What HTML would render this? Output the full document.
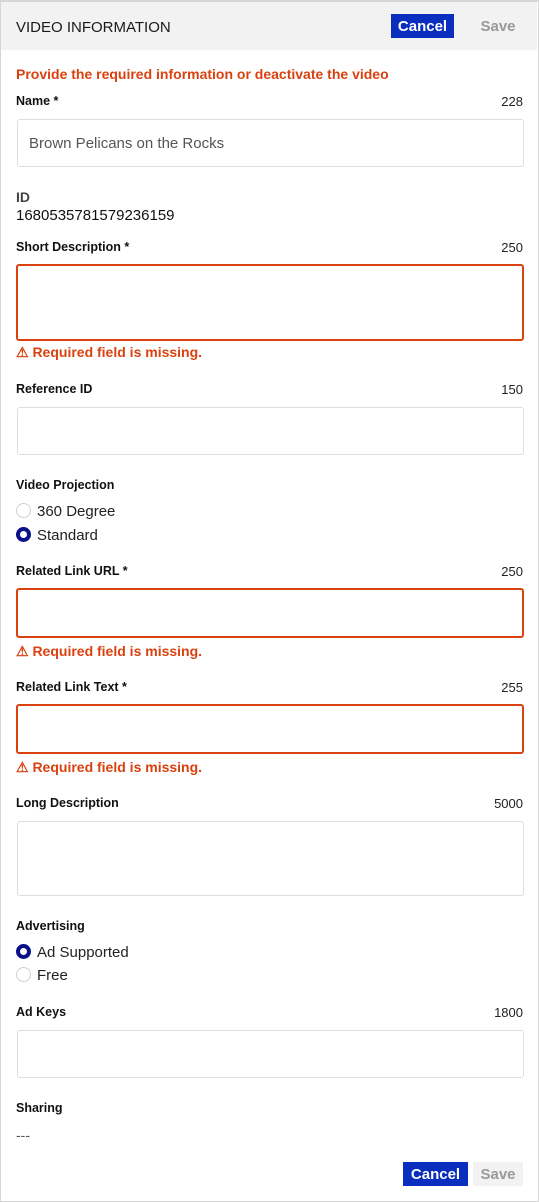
<!DOCTYPE html>
<html><head><meta charset="utf-8"><style>
*{box-sizing:border-box;margin:0;padding:0}
body{width:539px;height:1202px;background:#fff;font-family:"Liberation Sans",sans-serif;color:#1a1a1a;position:relative;overflow:hidden}
.frame{position:absolute;left:0;top:0;width:539px;height:1202px;border:1px solid #d6d6d6;border-top-width:2px}
.hdr{position:absolute;left:1px;top:2px;width:536px;height:48px;background:#f2f2f2}
.a{position:absolute;white-space:nowrap}
.lbl{font-size:12.5px;font-weight:bold;color:#111}
.cnt{font-size:13px;right:16px;color:#222}
.in{position:absolute;left:17px;width:507px;border:1px solid #dedede;border-radius:3px}
.err{border:2px solid #d9410f;left:16px;width:508px}
.req{font-size:14px;font-weight:bold;color:#d9410f;left:16px}
.txt{font-size:15px;color:#222}
.r{position:absolute;left:16px;width:15px;height:15px;border-radius:50%;border:1px solid #cfcfcf;background:#fff}
.r.on{border:4px solid #0a0f8a;background:#fff}
.btn{position:absolute;background:#0a2fbf;color:#fff;font-weight:bold;font-size:15px;display:flex;align-items:center;justify-content:center}
.sv{position:absolute;color:#999;font-weight:bold;font-size:15px;display:flex;align-items:center;justify-content:center}
</style></head><body>
<div class="frame"></div>
<div class="hdr"></div>
<div class="a" style="left:16px;top:19px;font-size:15px;color:#1a1a1a">VIDEO INFORMATION</div>
<div class="btn" style="left:391px;top:14px;width:63px;height:24px">Cancel</div>
<div class="sv" style="left:473px;top:14px;width:50px;height:24px">Save</div>

<div class="a" style="left:16px;top:66px;font-size:14px;font-weight:bold;color:#d9410f">Provide the required information or deactivate the video</div>

<div class="a lbl" style="left:16px;top:94px">Name *</div><div class="a cnt" style="top:94px">228</div>
<div class="in" style="top:119px;height:48px"></div>
<div class="a txt" style="left:29px;top:135px;color:#555">Brown Pelicans on the Rocks</div>

<div class="a" style="left:16px;top:189px;font-size:14px;font-weight:bold;color:#444">ID</div>
<div class="a txt" style="left:16px;top:207px;color:#111">1680535781579236159</div>

<div class="a lbl" style="left:16px;top:240px">Short Description *</div><div class="a cnt" style="top:240px">250</div>
<div class="in err" style="top:264px;height:77px"></div>
<div class="a req" style="top:344px">⚠ Required field is missing.</div>

<div class="a lbl" style="left:16px;top:382px">Reference ID</div><div class="a cnt" style="top:382px">150</div>
<div class="in" style="top:407px;height:48px"></div>

<div class="a lbl" style="left:16px;top:478px">Video Projection</div>
<div class="r" style="top:503px"></div><div class="a txt" style="left:37px;top:503px">360 Degree</div>
<div class="r on" style="top:527px"></div><div class="a txt" style="left:37px;top:527px">Standard</div>

<div class="a lbl" style="left:16px;top:564px">Related Link URL *</div><div class="a cnt" style="top:564px">250</div>
<div class="in err" style="top:588px;height:50px"></div>
<div class="a req" style="top:643px">⚠ Required field is missing.</div>

<div class="a lbl" style="left:16px;top:680px">Related Link Text *</div><div class="a cnt" style="top:680px">255</div>
<div class="in err" style="top:704px;height:50px"></div>
<div class="a req" style="top:759px">⚠ Required field is missing.</div>

<div class="a lbl" style="left:16px;top:796px">Long Description</div><div class="a cnt" style="top:796px">5000</div>
<div class="in" style="top:821px;height:75px"></div>

<div class="a lbl" style="left:16px;top:919px">Advertising</div>
<div class="r on" style="top:944px"></div><div class="a txt" style="left:37px;top:944px">Ad Supported</div>
<div class="r" style="top:967px"></div><div class="a txt" style="left:37px;top:967px">Free</div>

<div class="a lbl" style="left:16px;top:1005px">Ad Keys</div><div class="a cnt" style="top:1005px">1800</div>
<div class="in" style="top:1030px;height:48px"></div>

<div class="a lbl" style="left:16px;top:1101px">Sharing</div>
<div class="a" style="left:16px;top:1127px;font-size:14px;color:#555">---</div>

<div class="btn" style="left:403px;top:1162px;width:65px;height:24px">Cancel</div>
<div class="sv" style="left:473px;top:1162px;width:50px;height:24px;background:#f2f2f2">Save</div>
</body></html>
